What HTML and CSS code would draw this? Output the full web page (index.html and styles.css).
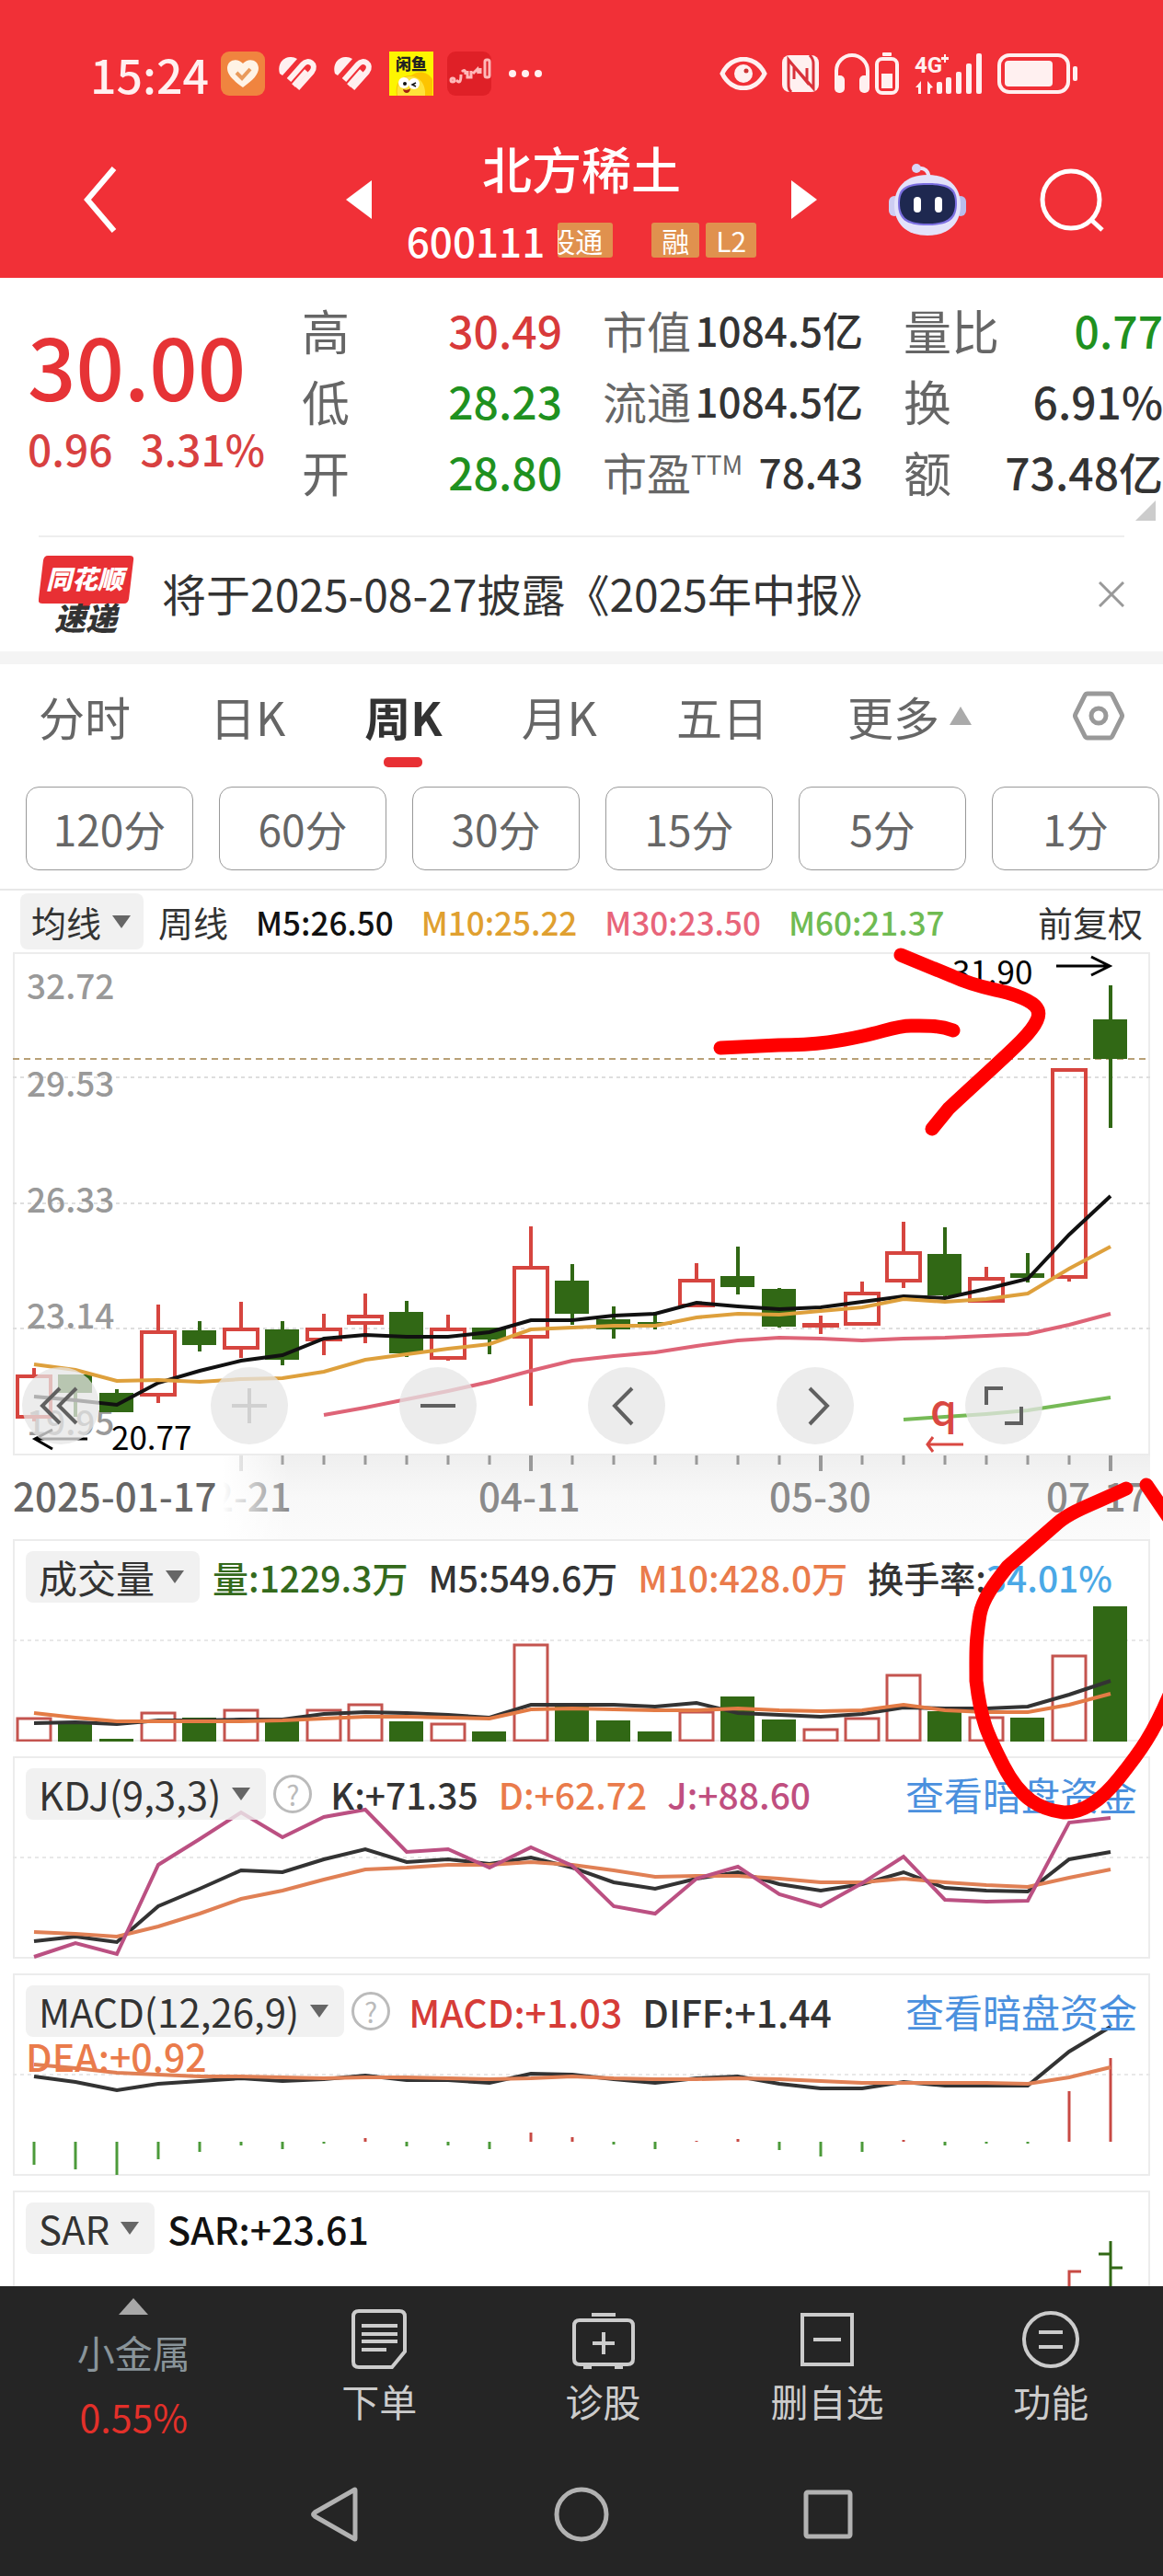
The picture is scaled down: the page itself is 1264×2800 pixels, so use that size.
FILE: index.html
```html
<!DOCTYPE html>
<html lang="zh-CN">
<head>
    <meta charset="UTF-8">
    <meta name="viewport" content="width=device-width, initial-scale=1.0">
    <title>北方稀土 600111</title>
    <link rel="stylesheet" href="styles.css">
</head>
<body>
    <header class="top">
        <div class="status-bar">
            <span class="clock">15:24</span>
            <svg class="s-tile" width="48" height="48" viewBox="0 0 48 48">
                <rect width="48" height="48" rx="9" fill="#f0843f"/>
                <path d="M24 39C13 31 7 25 7 18c0-9 11-12 17-5 6-7 17-4 17 5 0 7-6 13-17 21z" fill="#fff3e6"/>
                <path d="M17 23l6 6 9-10" fill="none" stroke="#e99a5b" stroke-width="4"/>
            </svg>
            <svg class="s-mark" width="42" height="36" viewBox="0 0 42 36">
                <path d="M1 18C-3 4 10-4 20 2L4 20z" fill="#fff0f0"/>
                <path d="M11 25L26 8c6-7 16 0 10 8L20 34" fill="none" stroke="#fff0f0" stroke-width="6"/>
                <path d="M16 31L30 15" stroke="#fff0f0" stroke-width="5"/>
            </svg>
            <svg class="s-mark" width="42" height="36" viewBox="0 0 42 36">
                <path d="M1 18C-3 4 10-4 20 2L4 20z" fill="#fff0f0"/>
                <path d="M11 25L26 8c6-7 16 0 10 8L20 34" fill="none" stroke="#fff0f0" stroke-width="6"/>
                <path d="M16 31L30 15" stroke="#fff0f0" stroke-width="5"/>
            </svg>
            <svg width="48" height="48" viewBox="0 0 48 48">
                <rect width="48" height="48" fill="#fdf500"/>
                <text x="24" y="20" class="fish-text">闲鱼</text>
                <path d="M8 48c-2-14 4-22 16-22 8-6 18-4 23 4v18z" fill="#fdc400"/>
                <path d="M9 48c-2-14 5-21 14-21 10 0 17 8 16 21z" fill="#ffe23a"/>
                <circle cx="16" cy="34" r="6" fill="#fff"/><circle cx="27" cy="35" r="6" fill="#fff"/>
                <circle cx="17" cy="35" r="2" fill="#111"/><path d="M29 34l-4 2 4 2" fill="none" stroke="#111" stroke-width="1.5"/>
                <path d="M15 41c3 1 6 1 8-1 0 6-7 7-8 1z" fill="#a32010"/>
            </svg>
            <svg width="48" height="48" viewBox="0 0 48 48">
                <rect width="48" height="48" rx="9" fill="#df2027"/>
                <g fill="none" stroke="#ffb9b9" stroke-width="3">
                    <circle cx="6" cy="31" r="2"/><path d="M10 31q5 6 5-6M16 22q4-4 4 3M22 21v7h4v-7M28 24l5-5 1 5M36 24v-6"/>
                    <rect x="41" y="9" width="5" height="19" rx="2"/>
                </g>
            </svg>
            <svg class="dots" width="36" height="8" viewBox="0 0 36 8" fill="#fff0f0"><circle cx="4" cy="4" r="4"/><circle cx="18" cy="4" r="4"/><circle cx="32" cy="4" r="4"/></svg>
            <div class="status-right">
                <svg width="52" height="36" viewBox="0 0 52 36">
                    <path d="M3 18C13-3 39-3 49 18 39 39 13 39 3 18z" fill="none" stroke="#fff0f0" stroke-width="5"/>
                    <circle cx="26" cy="18" r="10" fill="#fff0f0"/><circle cx="29" cy="15" r="2.5" fill="#c33"/>
                </svg>
                <svg width="40" height="40" viewBox="0 0 40 40">
                    <rect width="40" height="40" rx="8" fill="#fff0f0"/>
                    <path d="M10 40c-3-3-3-5-3-9V5l20 24V14M30 0c3 3 4 5 4 9v27L13 12v14" fill="none" stroke="#d8323a" stroke-width="3"/>
                </svg>
                <svg width="72" height="46" viewBox="0 0 72 46">
                    <path d="M3 30V20a17 17 0 0 1 34 0v10" fill="none" stroke="#fff0f0" stroke-width="4"/>
                    <rect x="1" y="25" width="11" height="19" rx="5" fill="#fff0f0"/><rect x="28" y="25" width="11" height="19" rx="5" fill="#fff0f0"/>
                    <rect x="53" y="0" width="10" height="4" rx="1" fill="#fff0f0"/>
                    <rect x="47" y="7" width="22" height="37" rx="6" fill="none" stroke="#fff0f0" stroke-width="4"/>
                    <rect x="52" y="23" width="12" height="16" fill="#fff0f0"/>
                </svg>
                <svg width="74" height="44" viewBox="0 0 74 44" fill="#fff0f0">
                    <text x="0" y="21" class="net-text">4G</text>
                    <path d="M29 4h3V1h2v3h3v3h-3v3h-2V7h-3zM1 37l6-7v14H4v-7zM20 37l-6-7v14h3v-6z"/>
                    <rect x="24" y="31" width="6" height="13" rx="2"/><rect x="34" y="26" width="6" height="18" rx="2"/>
                    <rect x="45" y="20" width="6" height="24" rx="2"/><rect x="56" y="11" width="6" height="33" rx="2"/>
                    <rect x="67" y="0" width="6" height="44" rx="2"/>
                </svg>
                <svg width="88" height="44" viewBox="0 0 88 44">
                    <rect x="2" y="2" width="75" height="40" rx="11" fill="none" stroke="#fff0f0" stroke-width="4"/>
                    <rect x="8" y="8" width="52" height="28" rx="4" fill="#fff0f0"/>
                    <rect x="82" y="14" width="5" height="16" rx="2" fill="#fff0f0"/>
                </svg>
            </div>
        </div>

        <div class="app-bar">
            <button class="icon-btn back" aria-label="返回">
                <svg width="40" height="76" viewBox="0 0 40 76"><path d="M36 4L7 38l29 34" fill="none" stroke="#fff" stroke-width="6"/></svg>
            </button>
            <div class="stock">
                <button class="icon-btn" aria-label="上一只"><svg width="28" height="42" viewBox="0 0 28 42"><path d="M28 0v42L0 21z" fill="#fff"/></svg></button>
                <div class="stock-name">
                    <h1>北方稀土</h1>
                    <div class="stock-code">
                        <span class="code">600111</span>
                        <span class="tag tag-cut">股通</span>
                        <span class="tag tag-right">融</span>
                        <span class="tag">L2</span>
                    </div>
                </div>
                <button class="icon-btn" aria-label="下一只"><svg width="28" height="42" viewBox="0 0 28 42"><path d="M0 0v42l28-21z" fill="#fff"/></svg></button>
            </div>
            <div class="actions">
                <button class="icon-btn" aria-label="智能助手">
                    <svg width="84" height="80" viewBox="0 0 84 80">
                        <path d="M31 6q12-2 13 12" fill="none" stroke="#e9e3fb" stroke-width="4"/><circle cx="30" cy="6" r="5" fill="#d9d6f8"/>
                        <rect y="36" width="12" height="22" rx="6" fill="#cdcdf2"/><rect x="72" y="36" width="12" height="22" rx="6" fill="#b9bdec"/>
                        <path d="M42 13c24 0 36 14 36 33S66 79 42 79 6 65 6 46s12-33 36-33z" fill="#e3e2fa"/>
                        <path d="M42 22c24 0 32 5 32 22S66 68 42 68 10 61 10 44s8-22 32-22z" fill="#7b6fe0"/>
                        <path d="M42 24c22 0 30 5 30 20s-8 22-30 22-30-7-30-22 8-20 30-20z" fill="#1e2850"/>
                        <rect x="27" y="37" width="8" height="17" rx="4" fill="#fff"/><rect x="50" y="37" width="8" height="17" rx="4" fill="#fff"/>
                    </svg>
                </button>
                <button class="icon-btn" aria-label="搜索">
                    <svg width="70" height="70" viewBox="0 0 70 70" fill="none" stroke="#fff" stroke-width="5"><circle cx="34" cy="35" r="31"/><path d="M55 56l13 12"/></svg>
                </button>
            </div>
        </div>
    </header>

    <section class="quote">
        <div class="price-box">
            <div class="price">30.00</div>
            <div class="change"><span>0.96</span><span>3.31%</span></div>
        </div>
        <div class="stats">
            <dl class="large">
                <div><dt>高</dt><dd class="up">30.49</dd></div>
                <div><dt>低</dt><dd class="down">28.23</dd></div>
                <div><dt>开</dt><dd class="down">28.80</dd></div>
            </dl>
            <dl class="small">
                <div><dt>市值</dt><dd>1084.5亿</dd></div>
                <div><dt>流通</dt><dd>1084.5亿</dd></div>
                <div><dt>市盈<sup>TTM</sup></dt><dd>78.43</dd></div>
            </dl>
            <dl class="large">
                <div><dt>量比</dt><dd class="down">0.77</dd></div>
                <div><dt>换</dt><dd>6.91%</dd></div>
                <div><dt>额</dt><dd>73.48亿</dd></div>
            </dl>
        </div>
        <span class="corner"></span>
    </section>

    <div class="notice">
        <svg width="104" height="84" viewBox="0 0 104 84">
            <path d="M10 0h89q5 0 4 5l-5 42q-1 5-5 5H57l-6 8-7-8H4q-5 0-4-5l5-42q1-5 5-5z" fill="#e83034"/>
            <text x="50" y="36" class="logo-a">同花顺</text>
            <text x="51" y="81" class="logo-b">速递</text>
        </svg>
        <a class="notice-text" href="#">将于2025-08-27披露《2025年中报》</a>
        <button class="icon-btn" aria-label="关闭">
            <svg width="28" height="28" viewBox="0 0 28 28"><path d="M1 1l26 26M27 1L1 27" stroke="#999" stroke-width="3"/></svg>
        </button>
    </div>

    <nav class="tabs">
        <button>分时</button>
        <button>日K</button>
        <button class="active">周K</button>
        <button>月K</button>
        <button>五日</button>
        <button class="more">更多<svg width="26" height="22" viewBox="0 0 26 22"><path d="M13 1l12 20H1z" fill="#aaa"/></svg></button>
        <button class="setting" aria-label="设置">
            <svg width="56" height="54" viewBox="0 0 56 54" fill="none" stroke="#999" stroke-width="5"><path d="M16 3h24q2 0 3 2l10 20q1 2 0 4L43 49q-1 2-3 2H16q-2 0-3-2L3 29q-1-2 0-4L13 5q1-2 3-2z"/><circle cx="28" cy="27" r="8"/></svg>
        </button>
    </nav>

    <div class="minutes">
        <button>120分</button>
        <button>60分</button>
        <button>30分</button>
        <button>15分</button>
        <button>5分</button>
        <button>1分</button>
    </div>

    <div class="ma-row">
        <button class="pill">均线<i class="caret"></i></button>
        <span>周线</span>
        <span class="c-black ma">M5:26.50</span>
        <span class="c-gold ma">M10:25.22</span>
        <span class="c-pink ma">M30:23.50</span>
        <span class="c-lime ma">M60:21.37</span>
        <span class="fq">前复权</span>
    </div>

    <!-- every plot uses the same canvas coordinates, each viewBox picks its own slice -->
    <main class="charts">
        <div class="kline">
            <svg id="kline" viewBox="0 1035 1264 638">
                <defs>
                    <linearGradient id="stripFade" x1="0" y1="0" x2="0" y2="1">
                        <stop offset="0" stop-color="#efefef"/><stop offset="0.5" stop-color="#f8f8f8"/><stop offset="1" stop-color="#fbfbfb"/>
                    </linearGradient>
                    <linearGradient id="leftFade">
                        <stop offset="0" stop-color="#fff"/><stop offset="0.76" stop-color="#fff"/><stop offset="1" stop-color="#fff" stop-opacity="0"/>
                    </linearGradient>
                </defs>
                <rect x="14" y="1581" width="1236" height="92" fill="url(#stripFade)"/>
                <rect x="15" y="1036" width="1234" height="545" fill="#fff" stroke="#ececec" stroke-width="2"/>
                <path d="M14 1171H1250M14 1308H1250M14 1444H1250" stroke="#dedede" stroke-width="2" stroke-dasharray="4 4"/>
                <path d="M14 1151H1250" stroke="#b8a077" stroke-width="2" stroke-dasharray="7 5"/>
                <g class="axis">
                    <text x="29" y="1086">32.72</text>
                    <text x="29" y="1192">29.53</text>
                    <text x="29" y="1318">26.33</text>
                    <text x="29" y="1444">23.14</text>
                    <text x="29" y="1560">19.95</text>
                </g>
                <g id="ticks"></g>
                <text class="date" x="206" y="1643">02-21</text>
                <rect x="14" y="1582" width="300" height="91" fill="url(#leftFade)"/>
                <text class="date first" x="14" y="1643">2025-01-17</text>
                <text class="date" x="520" y="1643">04-11</text>
                <text class="date" x="836" y="1643">05-30</text>
                <text class="date" x="1137" y="1643">07-17</text>
                <g id="candles"></g>
                <g class="extreme">
                    <text x="121" y="1576">20.77</text>
                    <path d="M95 1564H38M57 1554L38 1564l19 11"/>
                    <text x="1035" y="1070">31.90</text>
                    <path d="M1148 1050h57M1186 1040l20 10-20 10"/>
                </g>
                <text class="q-mark" x="1011" y="1549">q</text>
                <path d="M1047 1570h-38M1014 1562l-6 8 6 8" fill="none" stroke="#d94842" stroke-width="3"/>
            </svg>
            <div class="controls">
                <button aria-label="最左"><svg viewBox="0 0 84 84"><path d="M41 23L22 42l19 19M59 23L40 42l19 19"/></svg></button>
                <button class="off" aria-label="放大"><svg viewBox="0 0 84 84"><path d="M42 23v38M23 42h38"/></svg></button>
                <button aria-label="缩小"><svg viewBox="0 0 84 84"><path d="M23 42h38"/></svg></button>
                <button aria-label="左移"><svg viewBox="0 0 84 84"><path d="M48 23L29 42l19 20"/></svg></button>
                <button aria-label="右移"><svg viewBox="0 0 84 84"><path d="M36 23l19 19-19 20"/></svg></button>
                <button aria-label="全屏"><svg viewBox="0 0 84 84"><path d="M23 41V23h18M61 43v18H43"/></svg></button>
            </div>
        </div>

        <div class="panel">
            <svg id="volume" viewBox="14 1673 1236 220"></svg>
            <div class="panel-head dense">
                <button class="pill">成交量<i class="caret"></i></button>
                <span class="c-green">量:1229.3万</span>
                <span>M5:549.6万</span>
                <span class="c-orange">M10:428.0万</span>
                <span>换手率:<b class="c-sky">34.01%</b></span>
            </div>
        </div>

        <div class="panel">
            <svg id="kdj" viewBox="14 1909 1236 220"></svg>
            <div class="panel-head dense">
                <button class="pill">KDJ(9,3,3)<i class="caret"></i></button>
                <button class="help" aria-label="说明">?</button>
                <span>K:+71.35</span>
                <span class="c-orange">D:+62.72</span>
                <span class="c-magenta">J:+88.60</span>
                <a href="#">查看暗盘资金</a>
            </div>
        </div>

        <div class="panel">
            <svg id="macd" viewBox="14 2145 1236 220"></svg>
            <div class="panel-head">
                <button class="pill">MACD(12,26,9)<i class="caret"></i></button>
                <button class="help" aria-label="说明">?</button>
                <span class="c-red">MACD:+1.03</span>
                <span>DIFF:+1.44</span>
                <a href="#">查看暗盘资金</a>
                <span class="c-orange second-line">DEA:+0.92</span>
            </div>
        </div>

        <div class="panel panel-last">
            <svg id="sar" viewBox="14 2381 1236 104"></svg>
            <div class="panel-head">
                <button class="pill">SAR<i class="caret"></i></button>
                <span class="c-black">SAR:+23.61</span>
            </div>
        </div>

        <!-- hand drawn marks -->
        <svg class="marks" viewBox="0 1035 1264 960">
            <path d="M783 1139L846 1136C890 1136 915 1131 938 1126S975 1115 990 1115 1020 1114 1036 1120"/>
            <path d="M979 1038L1035 1061C1065 1075 1085 1075 1104 1082S1133 1096 1127 1109C1120 1125 1100 1141 1031 1205L1013 1227"/>
            <path d="M1224 1618C1190 1634 1165 1642 1150 1655L1095 1703C1080 1722 1068 1738 1065 1755 1060 1785 1061 1800 1061 1827 1066 1870 1073 1885 1091 1920S1130 1967 1156 1970C1180 1971 1200 1953 1216 1933 1240 1903 1253 1885 1272 1840M1246 1614L1274 1655"/>
        </svg>
    </main>

    <footer class="bottom">
        <nav class="toolbar">
            <a href="#" class="sector">
                <svg width="32" height="18" viewBox="0 0 32 18"><path d="M16 0l16 18H0z" fill="#a8a8a8"/></svg>
                <span>小金属</span>
                <span class="rate">0.55%</span>
            </a>
            <a href="#">
                <svg width="68" height="68" viewBox="0 0 68 68"><path d="M12 3h44q6 0 6 6v38L48 64H12q-6 0-6-6V9q0-6 6-6zM15 19h39M15 28h39M15 36h39M15 45h27"/></svg>
                <span>下单</span>
            </a>
            <a href="#">
                <svg width="68" height="68" viewBox="0 0 68 68"><path d="M21 7h26M8 13h52q6 0 6 6v36q0 6-6 6H8q-6 0-6-6V19q0-6 6-6zM34 26v24M22 38h24M12 64h9M46 64h9"/></svg>
                <span>诊股</span>
            </a>
            <a href="#">
                <svg width="68" height="68" viewBox="0 0 68 68"><path d="M7 7h54v54H7zM19 34h30"/></svg>
                <span>删自选</span>
            </a>
            <a href="#">
                <svg width="68" height="68" viewBox="0 0 68 68"><circle cx="34" cy="34" r="29"/><path d="M21 26h26M21 42h26"/></svg>
                <span>功能</span>
            </a>
        </nav>
        <div class="sys-nav">
            <button class="icon-btn" aria-label="返回"><svg width="56" height="64" viewBox="0 0 56 64"><path d="M50 6v52q0 2-2 0L6 34q-3-2 0-4L48 6q2-2 2 0z"/></svg></button>
            <button class="icon-btn" aria-label="主页"><svg width="64" height="64" viewBox="0 0 64 64"><circle cx="32" cy="32" r="27"/></svg></button>
            <button class="icon-btn" aria-label="最近任务"><svg width="56" height="64" viewBox="0 0 56 64"><rect x="4" y="8" width="48" height="48" rx="2"/></svg></button>
        </div>
    </footer>

    <script src="chart.js"></script>
</body>
</html>
```

FILE: styles.css
```css
* {
    box-sizing: border-box;
}
body {
    margin: 0;
    background-color: #fff;
    color: #333;
    font-family: "Noto Sans CJK SC", "Noto Sans", sans-serif;
    font-size: 40px;
    overflow-x: hidden;
}
button {
    padding: 0;
    border: none;
    background: none;
    color: inherit;
    font: inherit;
    white-space: nowrap;
    cursor: pointer;
}
a {
    color: inherit;
    text-decoration: none;
}
svg {
    display: block;
    flex-shrink: 0;
}
h1, dl, dd {
    margin: 0;
}
.icon-btn {
    display: flex;
    align-items: center;
    justify-content: center;
}

/* header */
.top {
    background-color: #f13037;
    color: #fff;
}
.status-bar {
    display: flex;
    align-items: center;
    gap: 15px;
    height: 156px;
    padding: 4px 92px 0 98px;
}
.clock {
    width: 127px;
    font-size: 50px;
    font-weight: 500;
    line-height: 50px;
    color: #fff0f0;
}
.s-mark {
    margin-right: 3px;
}
.dots {
    margin-left: 4px;
}
.fish-text {
    font-size: 17px;
    font-weight: 900;
    text-anchor: middle;
    fill: #222;
}
.net-text {
    font-family: Roboto, sans-serif;
    font-size: 24px;
    font-weight: bold;
}
.status-right {
    display: flex;
    align-items: center;
    gap: 16px;
    margin-left: auto;
}
.app-bar {
    display: grid;
    grid-template-columns: 1fr auto 1fr;
    align-items: start;
    height: 146px;
    padding: 0 64px;
}
.app-bar .icon-btn {
    height: 122px;
}
.app-bar .back {
    justify-self: start;
    margin-left: 24px;
}
.stock {
    display: flex;
    gap: 38px;
}
.stock-name h1 {
    text-align: center;
    font-size: 54px;
    font-weight: 500;
    line-height: 54px;
}
.stock-code {
    display: flex;
    align-items: center;
    height: 38px;
    margin-top: 32px;
    white-space: nowrap;
}
.code {
    margin-right: 14px;
    font-size: 44px;
    font-weight: 500;
    line-height: 38px;
}
.tag {
    margin-right: 7px;
    padding: 0 11px;
    border-radius: 3px;
    background-color: #e0914e;
    font-size: 30px;
    line-height: 38px;
}
.tag-cut {
    display: flex;
    justify-content: flex-end;
    width: 60px;
    overflow: hidden;
}
.tag-right {
    margin-left: 35px;
}
.tag:last-child {
    margin-right: 0;
}
.actions {
    display: flex;
    justify-content: flex-end;
    gap: 80px;
}

/* quote */
.quote {
    position: relative;
    display: flex;
    padding: 18px 0 31px;
}
.price-box {
    flex: 0 0 328px;
    padding-left: 30px;
    color: #e63336;
}
.price {
    margin-top: 6px;
    font-size: 92px;
    font-weight: 500;
    line-height: 140px;
}
.change {
    display: flex;
    gap: 30px;
    margin-top: 3px;
    font-size: 46px;
    font-weight: 500;
    line-height: 36px;
    color: #d84040;
}
.stats {
    flex: 1;
    display: grid;
    grid-template-columns: 282fr 282fr 281fr;
    column-gap: 44px;
}
.stats dl > div {
    display: flex;
    align-items: center;
    justify-content: space-between;
    height: 77px;
    line-height: 77px;
    white-space: nowrap;
}
.stats dt {
    color: #666;
    font-size: 52px;
}
.stats dd {
    font-size: 48px;
    font-weight: 500;
}
.stats .small dt {
    font-size: 48px;
}
.stats .small dd {
    font-size: 44px;
}
.stats sup {
    font-size: 28px;
    line-height: 28px;
}
.stats .up {
    color: #d83a3a;
}
.stats .down {
    color: #1f911f;
}
.corner {
    position: absolute;
    right: 8px;
    bottom: 16px;
    border-left: 22px solid transparent;
    border-bottom: 22px solid #ccc;
}

/* notice */
.notice {
    display: flex;
    align-items: center;
    height: 126px;
    margin: 0 42px;
    border-top: 2px solid #eee;
}
.notice-text {
    margin: 0 auto 0 30px;
    padding-bottom: 4px;
    font-size: 48px;
    line-height: 60px;
    white-space: nowrap;
}
.logo-a, .logo-b {
    font-style: italic;
    font-weight: 900;
    text-anchor: middle;
}
.logo-a {
    font-size: 28px;
    fill: #fff;
}
.logo-b {
    font-size: 34px;
    fill: #333;
}

/* tabs */
.tabs {
    display: flex;
    gap: 86px;
    height: 147px;
    padding: 0 42px 22px;
    border-top: 14px solid #f4f4f4;
    font-size: 50px;
    color: #666;
}
.tabs button {
    position: relative;
    display: flex;
    align-items: center;
}
.tabs .active {
    font-weight: bold;
    color: #333;
}
.tabs .active::after {
    content: "";
    position: absolute;
    left: 50%;
    bottom: -1px;
    width: 42px;
    height: 11px;
    margin-left: -21px;
    border-radius: 5px;
    background-color: #e83034;
}
.tabs .more svg {
    margin-left: 10px;
}
.tabs .setting {
    margin-left: auto;
}
.minutes {
    display: flex;
    gap: 28px;
    padding: 0 4px 20px 28px;
    border-bottom: 2px solid #e8e8e8;
}
.minutes button {
    flex: 1;
    height: 91px;
    padding-bottom: 2px;
    border: 1px solid #999;
    border-radius: 14px;
    font-size: 46px;
    color: #666;
}

/* indicator labels */
.ma-row {
    display: flex;
    align-items: center;
    gap: 30px;
    height: 67px;
    padding: 0 22px;
    font-size: 38px;
    white-space: nowrap;
}
.ma-row .pill {
    height: 61px;
    margin-right: -14px;
    padding: 0 14px 0 12px;
}
.ma {
    font-size: 35px;
    font-weight: 500;
}
.fq {
    margin-left: auto;
}
.pill {
    display: flex;
    align-items: center;
    gap: 12px;
    height: 56px;
    padding: 0 17px 0 14px;
    border-radius: 8px;
    background-color: rgba(238, 238, 238, 0.8);
}
.caret {
    border: 10px solid transparent;
    border-top: 14px solid #666;
    border-bottom: none;
}
.c-black { color: #111; }
.c-gold { color: #e0a030; }
.c-pink { color: #e8657a; }
.c-lime { color: #6fbb52; }
.c-green { color: #346a1c; }
.c-orange { color: #ea7b4b; }
.c-sky { color: #4aa8e6; font-weight: 500; }
.c-magenta { color: #c04f80; }
.c-red { color: #d63c38; }

/* charts */
.charts {
    position: relative;
}
.kline {
    position: relative;
}
.kline > svg {
    width: 100%;
}
.axis text {
    font-size: 37px;
    font-weight: 500;
    fill: #999;
}
.date {
    font-size: 42px;
    font-weight: 500;
    fill: #8a8a8a;
}
.date.first {
    fill: #666;
}
.extreme text {
    font-size: 35px;
    fill: #000;
}
.extreme path {
    fill: none;
    stroke: #000;
    stroke-width: 3;
}
.q-mark {
    font-size: 46px;
    font-weight: 500;
    fill: #d94842;
}
.controls {
    position: absolute;
    left: 24px;
    right: 131px;
    top: 451px;
    display: flex;
    justify-content: space-between;
}
.controls button {
    width: 84px;
    height: 84px;
    border-radius: 50%;
    background-color: rgba(230, 230, 230, 0.75);
}
.controls path {
    fill: none;
    stroke: #606060;
    stroke-width: 4;
}
.controls .off path {
    stroke: #d0d0d0;
}
.panel {
    display: grid;
    margin: 0 14px 16px;
    box-shadow: inset 0 0 0 2px #ececec;
}
.panel > * {
    grid-area: 1 / 1;
}
.panel > svg {
    width: 100%;
}
.panel-last {
    margin-bottom: 0;
    box-shadow: inset 2px 2px 0 #ececec, inset -2px 0 0 #ececec;
}
.panel-head {
    display: flex;
    flex-wrap: wrap;
    align-items: center;
    align-content: flex-start;
    column-gap: 22px;
    padding: 13px 14px 0;
    font-size: 41px;
    line-height: 56px;
    white-space: nowrap;
}
.dense {
    font-size: 39px;
}
.panel-head .pill {
    margin-right: -8px;
}
.panel-head .pill,
.panel-head a {
    font-size: 42px;
}
.panel-head a {
    margin-left: auto;
    color: #4a90de;
}
.panel-head span {
    font-weight: 500;
}
.help {
    width: 42px;
    height: 42px;
    margin: 0 -2px 0 -6px;
    border: 3px solid #bbb;
    border-radius: 50%;
    font-size: 30px;
    line-height: 36px;
    color: #bbb;
}
.panel-head .second-line {
    flex-basis: 100%;
    line-height: 40px;
}
.marks {
    position: absolute;
    left: 0;
    top: 0;
    width: 100%;
    overflow: visible;
    pointer-events: none;
}
.marks path {
    fill: none;
    stroke: #f00;
    stroke-width: 15;
    stroke-linecap: round;
    stroke-linejoin: round;
}

/* bottom */
.bottom {
    position: relative;
    background-color: #252525;
    color: #ccc;
    font-size: 41px;
}
.toolbar {
    display: grid;
    grid-template-columns: 290fr 243fr 243fr 243fr 243fr;
    height: 190px;
}
.toolbar a {
    display: flex;
    flex-direction: column;
    align-items: center;
    padding-top: 24px;
    line-height: 64px;
}
.toolbar path,
.toolbar circle,
.sys-nav svg {
    fill: none;
    stroke: #ccc;
    stroke-width: 4;
}
.toolbar .sector {
    padding-top: 13px;
    line-height: 80px;
    color: #89949a;
}
.sector path {
    fill: #a8a8a8;
    stroke: none;
}
.sector span {
    height: 70px;
}
.sector .rate {
    color: #e3302a;
}
.sys-nav {
    display: flex;
    justify-content: center;
    gap: 208px;
    height: 126px;
    padding-bottom: 11px;
}
.sys-nav svg {
    stroke: #b2b2b2;
    stroke-width: 5;
}
```

FILE: chart.js
```js
const NS = 'http://www.w3.org/2000/svg';
const STEP = 45;
const FIRST = 37;
const RED = '#d6453f';
const GREEN = '#316815';

function add(parent, name, attrs) {
    const el = document.createElementNS(NS, name);
    for (const key in attrs) el.setAttribute(key, attrs[key]);
    parent.appendChild(el);
    return el;
}

function xAt(i) {
    return FIRST + i * STEP;
}

function line(parent, ys, color, start = 0) {
    const points = ys.map((y, i) => xAt(i + start) + ',' + y).join(' ');
    add(parent, 'polyline', { points, fill: 'none', stroke: color, 'stroke-width': 4 });
}

function dashed(parent, y) {
    add(parent, 'path', { d: `M14 ${y}H1250`, stroke: '#e8e8e8', 'stroke-width': 2, 'stroke-dasharray': '4 4' });
}

// up (1) or down (0), high, body top, body bottom, low
const candles = [
    [1, 1487, 1494, 1542, 1545], [0, 1494, 1494, 1514, 1540], [0, 1510, 1514, 1535, 1535],
    [1, 1418, 1446, 1518, 1525], [0, 1436, 1446, 1462, 1469], [1, 1415, 1443, 1467, 1476],
    [0, 1436, 1445, 1478, 1484], [1, 1428, 1443, 1458, 1473], [1, 1406, 1429, 1440, 1460],
    [0, 1414, 1426, 1471, 1475], [1, 1429, 1443, 1478, 1479], [0, 1443, 1443, 1456, 1472],
    [1, 1333, 1376, 1455, 1528], [0, 1374, 1392, 1428, 1440], [0, 1420, 1434, 1445, 1455],
    [0, 1426, 1437, 1440, 1445], [1, 1373, 1390, 1421, 1421], [0, 1355, 1387, 1399, 1407],
    [0, 1400, 1401, 1442, 1443], [1, 1430, 1438, 1443, 1450], [1, 1393, 1404, 1441, 1441],
    [1, 1328, 1360, 1394, 1400], [0, 1334, 1363, 1408, 1410], [1, 1377, 1388, 1416, 1416],
    [0, 1362, 1384, 1389, 1394], [1, 1161, 1161, 1390, 1393], [0, 1071, 1108, 1151, 1226]
];

const kline = document.getElementById('candles');
candles.forEach(([up, high, top, bottom, low], i) => {
    const x = xAt(i);
    const color = up ? RED : GREEN;
    add(kline, 'path', { d: `M${x} ${high}V${top}M${x} ${bottom}V${low}`, stroke: color, 'stroke-width': 4 });
    if (up) {
        add(kline, 'rect', { x: x - 18, y: top + 2, width: 36, height: Math.max(bottom - top - 4, 1), fill: 'none', stroke: RED, 'stroke-width': 4 });
    } else {
        add(kline, 'rect', { x: x - 19, y: top, width: 37, height: bottom - top, fill: GREEN });
    }
});
line(kline, [1518, 1522, 1527, 1503, 1490, 1479, 1473, 1455, 1451, 1453, 1453, 1448, 1435, 1435, 1430, 1428, 1416, 1420, 1423, 1421, 1415, 1409, 1411, 1401, 1390, 1342, 1300], '#111');
line(kline, [1483, 1489, 1501, 1500, 1502, 1499, 1498, 1491, 1478, 1472, 1466, 1461, 1445, 1443, 1441, 1441, 1432, 1428, 1429, 1425, 1421, 1412, 1415, 1412, 1406, 1379, 1355], '#dea03c');
line(kline, [1538, 1530, 1521, 1512, 1502, 1490, 1479, 1474, 1470, 1463, 1457, 1454, 1455, 1457, 1455, 1454, 1452, 1450, 1440, 1428], '#de6477', 7);
line(kline, [1543, 1540, 1537, 1533, 1526, 1519], '#76ba56', 21);

const ticks = document.getElementById('ticks');
for (let i = 5; i < 27; i++) {
    const major = (i - 5) % 7 === 0;
    add(ticks, 'path', { d: `M${xAt(i)} 1582v${major ? 17 : 10}`, stroke: '#999', 'stroke-width': major ? 4 : 3 });
}

const volume = document.getElementById('volume');
dashed(volume, 1783);
[1867, 1872, 1890, 1861, 1867, 1858, 1871, 1858, 1852, 1871, 1873, 1882, 1787, 1855, 1870, 1882, 1860, 1844, 1869, 1879, 1867, 1820, 1860, 1866, 1867, 1799, 1746].forEach((y, i) => {
    const x = xAt(i);
    if (candles[i][0]) {
        add(volume, 'rect', { x: x - 18, y: y + 1, width: 36, height: 1891 - y, fill: 'none', stroke: '#c4544f', 'stroke-width': 3 });
    } else {
        add(volume, 'rect', { x: x - 19, y, width: 37, height: 1893 - y, fill: GREEN });
    }
});
line(volume, [1873, 1872, 1874, 1870, 1870, 1869, 1869, 1863, 1861, 1862, 1864, 1867, 1853, 1853, 1853, 1855, 1851, 1862, 1864, 1866, 1863, 1856, 1857, 1857, 1855, 1842, 1827], '#333');
line(volume, [1862, 1867, 1871, 1871, 1871, 1871, 1870, 1868, 1866, 1866, 1867, 1868, 1858, 1857, 1858, 1859, 1859, 1857, 1859, 1860, 1859, 1853, 1859, 1861, 1861, 1853, 1841], '#e37b45');

const kdj = document.getElementById('kdj');
dashed(kdj, 2019);
line(kdj, [2110, 2105, 2111, 2072, 2053, 2033, 2035, 2021, 2010, 2024, 2021, 2026, 2019, 2030, 2046, 2053, 2042, 2035, 2048, 2055, 2048, 2035, 2052, 2055, 2056, 2021, 2013], '#333');
line(kdj, [2100, 2102, 2105, 2094, 2080, 2064, 2055, 2043, 2032, 2030, 2027, 2027, 2024, 2027, 2033, 2040, 2039, 2039, 2042, 2046, 2046, 2042, 2046, 2049, 2051, 2041, 2032], '#e08055');
line(kdj, [2127, 2112, 2124, 2027, 1999, 1970, 1997, 1975, 1967, 2013, 2010, 2030, 2008, 2028, 2072, 2080, 2042, 2029, 2059, 2072, 2047, 2018, 2065, 2067, 2066, 1981, 1976], '#bb5082');

const macd = document.getElementById('macd');
const zero = 2328;
dashed(macd, 2255);
[2353, 2358, 2364, 2347, 2339, 2332, 2336, 2330, 2324, 2333, 2332, 2336, 2318, 2323, 2331, 2336, 2327, 2325, 2337, 2344, 2339, 2326, 2332, 2330, 2330, 2273, 2237].forEach((y, i) => {
    add(macd, 'path', { d: `M${xAt(i)} ${zero}V${y}`, stroke: y < zero ? '#c84a44' : '#4c9a3a', 'stroke-width': 3 });
});
line(macd, [2257, 2263, 2272, 2265, 2262, 2259, 2262, 2260, 2256, 2261, 2261, 2264, 2254, 2255, 2260, 2264, 2259, 2257, 2265, 2270, 2270, 2263, 2267, 2267, 2267, 2230, 2203], '#333');
line(macd, [2244, 2248, 2253, 2255, 2257, 2257, 2258, 2259, 2258, 2258, 2259, 2260, 2259, 2257, 2259, 2260, 2260, 2259, 2260, 2262, 2264, 2264, 2264, 2264, 2265, 2258, 2247], '#e08055');

const sar = document.getElementById('sar');
add(sar, 'path', { d: 'M1175 2469H1162V2485', fill: 'none', stroke: '#c84a44', 'stroke-width': 3 });
add(sar, 'path', { d: 'M1207 2436V2485M1194 2450H1207M1207 2465H1220', fill: 'none', stroke: GREEN, 'stroke-width': 3 });
```
